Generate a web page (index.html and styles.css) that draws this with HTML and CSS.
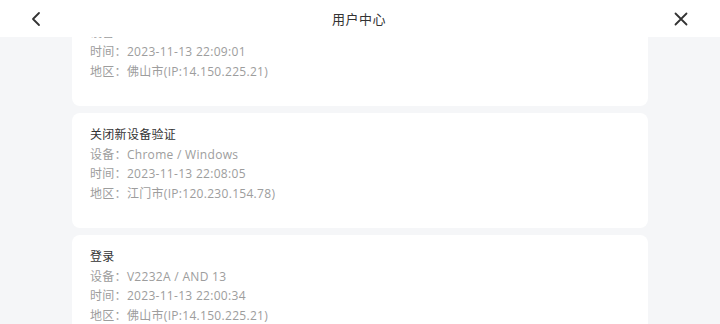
FILE: index.html
```html
<html lang="zh-CN">
<head>
    <meta charset="UTF-8">
    <meta name="viewport" content="width=device-width, initial-scale=1.0">
    <title>用户中心</title>
    <link rel="stylesheet" href="styles.css">
</head>

<body>
    <header class="topbar">
        <span class="back">
            <svg width="14" height="16" viewBox="0 0 14 16"><polyline points="10,2 4,8 10,14" fill="none" stroke="#333" stroke-width="1.8" stroke-linecap="round" stroke-linejoin="round"/></svg>
        </span>
        <h2 class="title">用户中心</h2>
        <span class="close">
            <svg width="16" height="16" viewBox="0 0 16 16"><path d="M2.5 2.5 L13.5 13.5 M13.5 2.5 L2.5 13.5" fill="none" stroke="#333" stroke-width="1.8" stroke-linecap="round"/></svg>
        </span>
    </header>

    <div class="list">
        <div class="card">
            <p class="name">登录</p>
            <p>设备：V2232A / AND 13</p>
            <p>时间：2023-11-13 22:09:01</p>
            <p>地区：佛山市(IP:14.150.225.21)</p>
        </div>
        <div class="card">
            <p class="name">关闭新设备验证</p>
            <p>设备：Chrome / Windows</p>
            <p>时间：2023-11-13 22:08:05</p>
            <p>地区：江门市(IP:120.230.154.78)</p>
        </div>
        <div class="card">
            <p class="name">登录</p>
            <p>设备：V2232A / AND 13</p>
            <p>时间：2023-11-13 22:00:34</p>
            <p>地区：佛山市(IP:14.150.225.21)</p>
        </div>
    </div>
</body>
</html>
```

FILE: styles.css
```css
*{
    box-sizing: border-box;
    margin: 0;
}
body{
    background: #f5f6f8;
    font-family: "Open Sans", "Noto Sans CJK SC", sans-serif;
    overflow: hidden;
}
.topbar{
    position: fixed;
    top: 0;
    left: 0;
    right: 0;
    height: 37px;
    background: #fff;
    display: flex;
    align-items: center;
    justify-content: space-between;
    padding: 0 31px 0 29px;
    z-index: 2;
}
.back, .close{
    display: flex;
    width: 16px;
    height: 16px;
    align-items: center;
}
.title{
    font-size: 13px;
    font-weight: normal;
    color: #333;
    letter-spacing: 0.5px;
}
.list{
    padding: 0 72px;
    margin-top: -9px;
    display: flex;
    flex-direction: column;
    gap: 7px;
}
.card{
    background: #fff;
    border-radius: 8px;
    height: 115px;
    padding: 12px 18px 0;
}
.card p{
    font-size: 12px;
    line-height: 19.7px;
    color: #9d9d9d;
    letter-spacing: 0.3px;
}
.card .name{
    color: #333;
}
```
